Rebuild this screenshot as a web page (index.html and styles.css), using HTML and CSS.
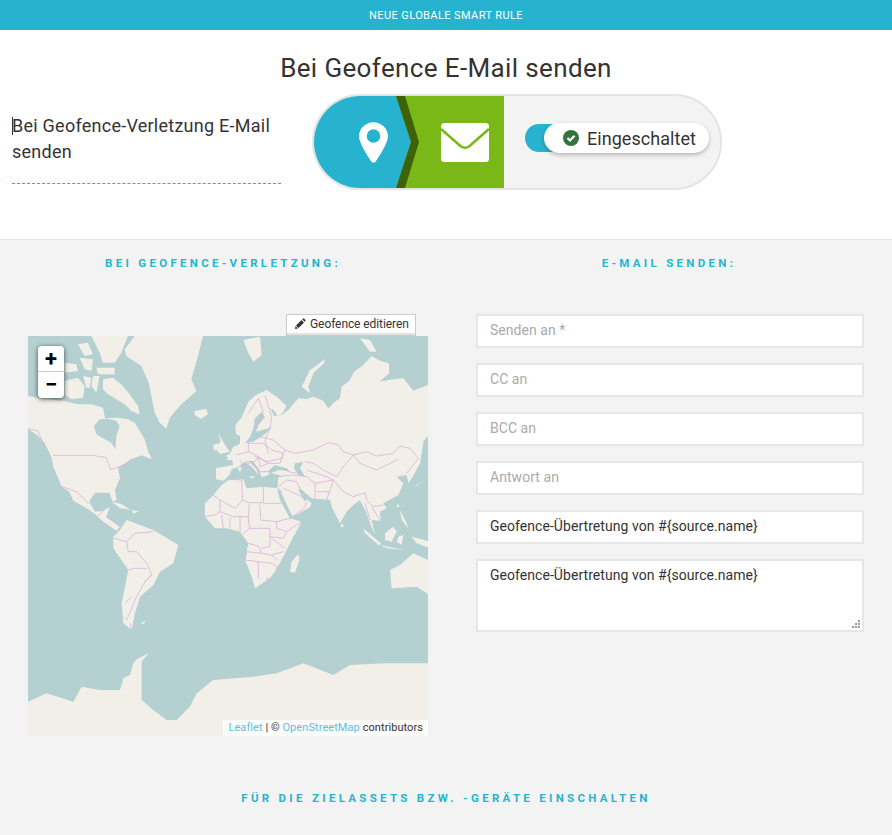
FILE: index.html
```html
<!DOCTYPE html>
<html lang="de">
<head>
<meta charset="utf-8">
<title>Neue globale Smart Rule</title>
<link rel="stylesheet" href="styles.css">
</head>
<body>
<header class="topbar">NEUE GLOBALE SMART RULE</header>
<section class="hero">
  <h1 class="hero-title">Bei Geofence E-Mail senden</h1>
  <div class="hero-row">
    <div class="desc"><span class="caret"></span>Bei Geofence-Verletzung E-Mail senden</div>
    <div class="pill">
      <div class="seg seg-blue">
        <svg class="pin" viewBox="0 0 30 42" width="29" height="41"><path fill="#fff" fill-rule="evenodd" d="M15 0C6.7 0 0 6.7 0 14.5 0 22 10 36 12.5 40.5c1.2 2 3.8 2 5 0C20 36 30 22 30 14.5 30 6.7 23.3 0 15 0ZM15 7.3a7 7 0 1 1 0 14 7 7 0 0 1 0-14Z"/></svg>
        <svg class="chevron" viewBox="0 0 24 92" width="24" height="92"><path fill="#27b3cf" d="M0 0 15 46 0 92Z"/><path fill="#3f6209" d="M0 0H9L23 46 9 92H0L15 46Z"/></svg>
      </div>
      <div class="seg seg-green">
        <svg class="mail" viewBox="0 0 48 39" width="48" height="39"><rect width="48" height="39" rx="3.5" fill="#fff"/><path d="M0 6 20 23.500Q24 26 28 23.500L48 6" fill="none" stroke="#7ab818" stroke-width="2.600"/></svg>
      </div>
      <div class="toggle">
        <span class="track"></span>
        <span class="knob">
          <svg class="check" viewBox="0 0 16 16" width="16" height="16"><circle cx="8" cy="8" r="8" fill="#35733b"/><path d="M4.500 8 7 10.500 11.500 5.800" fill="none" stroke="#fff" stroke-width="2.200"/></svg>
          Eingeschaltet
        </span>
      </div>
    </div>
  </div>
</section>
<main class="config">
  <div class="columns heads">
    <h2 class="section-head">BEI GEOFENCE-VERLETZUNG:</h2>
    <h2 class="section-head">E-MAIL SENDEN:</h2>
  </div>
  <div class="columns body-row">
    <div class="map-col">
      <button class="edit-btn" type="button">
        <svg viewBox="0 0 12 12" width="12" height="12"><path fill="#333" d="M2 7.500 7.500 2 10 4.500 4.500 10ZM1 11 1.600 8 4 10.400ZM8.200 1.300 9 .6Q9.500.2 10 .6L11.400 2Q11.800 2.500 11.400 3L10.700 3.800Z"/></svg>
        Geofence editieren
      </button>
      <div class="map">
        <svg class="map-art" viewBox="28 336 400 400" width="400" height="400">
          <rect x="28" y="336" width="400" height="400" fill="#b5d0d0"/>
          <!-- Americas -->
          <g class="land" transform="translate(20 310) scale(.33333)">
            <path d="M24 258 60 265 134 273 174 283 214 283 249 293 255 325 294 323 324 328 344 338 374 388 384 423 396 448 364 436 334 448 319 458 294 473 300 505 285 540 290 570 278 575 268 548 225 548 207 575 225 605 250 603 270 590 258 622 300 650 290 662 250 635 225 612 205 598 160 572 148 545 125 530 100 470 94 440 74 400 54 378 24 356Z"/>
            <path d="M275 575 305 582 332 600 300 595ZM335 600 356 604 340 612Z"/>
          </g>
          <!-- Arctic Canada, Greenland and Iceland -->
          <g class="land" transform="translate(28 336) scale(.33333)">
            <path d="M290 40 320 0H525L510 60 490 130 505 165 460 205 425 245 415 278 395 260 380 230 362 140 340 90 295 60Z"/>
            <path d="M225 130 255 125 285 150 305 175 330 210 335 235 310 225 290 205 265 190 240 175 225 160Z"/>
            <path d="M110 135 150 125 170 150 165 185 130 190 110 175ZM165 120 190 125 185 155 175 155ZM195 120 215 120 205 170 190 150ZM110 80 145 85 150 105 110 110ZM205 95 260 95 260 115 210 115ZM190 0H300L280 50 260 80 225 80 215 50ZM150 25 180 20 195 55 170 60ZM155 65 195 70 190 105 170 100Z"/>
            <path d="M500 225 535 218 540 235 520 248 500 238Z"/>
          </g>
          <!-- Northern Eurasia -->
          <g class="land" transform="translate(150 330) scale(.33333)">
            <path d="M258 312 256 285 275 262 295 215 318 195 350 180 380 200 410 228 400 245 385 262 372 240 362 236 372 258 395 255 415 240 425 228 445 205 470 207 490 200 520 212 535 235 555 215 570 205 575 170 600 150 612 125 640 105 665 78 690 92 717 100 718 130 688 155 730 148 760 145 790 182 834 165V318L812 342 815 362 800 390H230L250 350 290 335 275 320Z"/>
            <path d="M455 170 480 120 525 88 522 100 490 130 475 170 480 190ZM280 30 330 20 335 75 310 95 295 70ZM630 25 660 30 680 65 660 65ZM205 310 225 345 240 365 210 372 195 355 212 335ZM190 345 205 340 205 355 192 362Z"/>
          </g>
          <g class="land" transform="translate(190 420) scale(.33333)">
            <path d="M150 0V70L125 100 105 108 125 115 130 135 78 145 78 178 100 182 118 165 125 148 145 140 165 125 185 140 205 165 200 148 175 122 190 125 205 145 215 172 235 165 240 158 275 168 265 172 262 205 272 210 285 250 305 292 360 262 365 250 350 238 345 245 325 210 330 205 365 235 420 240 425 260 450 310 470 275 490 255 510 240 530 280 540 310 555 345 545 300 572 302 570 275 590 265 580 250 625 225 640 190 620 170 650 165 655 190 668 170 690 130 695 100 700 70V0Z"/>
            <path d="M45 250 70 225 95 195 120 178 160 178 170 205 220 200 262 205 270 240 300 295 335 305 300 370 285 400 258 450 240 475 195 505 185 470 165 420 175 370 150 335 110 325 75 325 45 290Z"/>
            <path d="M325 402 328 420 315 458 300 455 305 425ZM455 308 462 320 452 322ZM520 325 575 372 565 375 525 340ZM570 375 640 390 590 385ZM585 340 610 320 620 335 605 365 585 360ZM625 350 640 345 635 375 620 365ZM665 350 720 365V385L680 370ZM630 270 650 310 655 325 635 300ZM668 205 715 175 680 195ZM618 262 625 250 628 260ZM145 140 155 142 152 155 145 152ZM175 170 195 168 188 176Z"/>
          </g>
          <g class="land" transform="translate(20 520) scale(.33333)">
            <path d="M320 0 400 30 475 75 460 130 420 155 400 195 360 230 345 280 335 330 310 310 305 250 325 150 280 85 280 50 300 30Z"/>
            <path d="M1224 120 1180 100 1140 135 1110 150 1115 205 1190 200 1224 222Z"/>
            <path d="M24 545 80 520 160 545 185 500 240 510 300 510 310 475 330 465 340 430 350 418 385 400 365 425 365 540 400 570 440 600 470 600 510 560 530 520 580 480 700 470 770 460 850 430 940 465 990 435 1100 430 1224 430V648H24Z"/>
            <path d="M362 308 376 304 372 312Z"/>
          </g>
          <!-- inland and enclosed water -->
          <g class="sea" transform="translate(150 330) scale(.33333)">
            <path d="M335 245 345 262 325 285 318 305 345 298 365 292 345 312 310 335 285 340 300 320 310 295 315 265Z"/>
          </g>
          <g class="sea" transform="translate(190 420) scale(.33333)">
            <path d="M232 155 255 135 290 145 300 155 270 150 240 160ZM315 130 340 125 330 145 345 170 325 165 312 145ZM262 215 272 215 310 295 300 295Z"/>
          </g>
          <g class="sea" transform="translate(28 336) scale(.33333)">
            <path d="M198 270 215 250 240 248 265 255 275 270 265 300 262 340 250 320 230 310 205 295Z"/>
          </g>
          <!-- borders -->
          <g class="borders" transform="translate(28 336) scale(.33333)">
            <path d="M75 358H195L235 365 248 402 290 385 310 370M0 278 30 285 50 335"/>
          </g>
          <g class="borders" transform="translate(20 310) scale(.33333)">
            <path d="M125 530 170 545 205 580M235 618 250 600M300 650 270 625"/>
          </g>
          <g class="borders" transform="translate(20 520) scale(.33333)">
            <path d="M282 55 320 65 345 40 400 35M320 65 325 95 350 95 380 130 395 165 375 185 350 230 320 300 310 290M325 150 340 145 380 145M375 185 395 165M315 250 335 230M335 330 330 310"/>
          </g>
          <g class="borders" transform="translate(150 330) scale(.33333)">
            <path d="M295 250 325 205 340 245 325 280 310 300M345 195 365 260 360 295 345 330 355 370"/>
          </g>
          <g class="borders" transform="translate(200 430) scale(.33333)">
            <path d="M110 75 145 65V40H190L215 60 250 70 240 100 205 100 175 80 145 65M175 80 180 110 205 100M135 95H165L175 80M155 100 180 125 205 125M120 90 130 105 150 100M265 125 290 130"/>
          </g>
          <g class="borders" transform="translate(190 420) scale(.33333)">
            <path d="M120 178 155 180 158 240 135 265 90 240 70 225M220 200V250H275M205 258 215 248H178L155 240M178 250 175 300 180 325 160 340M210 258 212 300 260 305 300 295M260 305V325L290 335 335 305M290 335 280 355 240 350V325H180M45 290 75 285 90 275 130 290H175M90 240V275M95 285 100 325M120 295V325M150 290V335M175 370 205 378 215 400 245 405 260 420M240 350V380L215 385M165 420 205 425V475M205 425 245 430 262 440 258 450M165 420 170 395 215 400M245 355 285 385M245 405 280 395"/>
            <circle cx="234" cy="480" r="5"/>
            <path d="M285 90 315 100 370 90 415 68 445 75 460 95 490 105 530 95 560 108 610 100 630 78 660 85 685 115 650 160M490 105 510 130 560 150 600 130 625 118M345 125 370 130 400 150 440 170 460 140 490 105M350 150 410 170 430 180 460 215 490 230 525 218 530 240M305 165 350 170 375 190V235M375 190 430 180M320 185 330 205M430 180 420 210 410 240M380 215H420M265 200 290 180 320 185M280 205 325 225 345 235M305 292 345 262 350 245M265 170 305 165M210 50 250 60 285 90 275 115 230 125 195 110M530 240 550 260 580 255M545 260 570 300M525 250 540 300"/>
          </g>
        </svg>
        <div class="zoom">
          <span class="zoom-btn">+</span>
          <span class="zoom-btn">−</span>
        </div>
        <div class="attribution"><span class="link">Leaflet</span> | © <span class="link">OpenStreetMap</span> contributors</div>
      </div>
    </div>
    <form class="mail-form">
      <input class="field" type="text" placeholder="Senden an *">
      <input class="field" type="text" placeholder="CC an">
      <input class="field" type="text" placeholder="BCC an">
      <input class="field" type="text" placeholder="Antwort an">
      <input class="field" type="text" value="Geofence-Übertretung von #{source.name}">
      <div class="area-wrap">
        <textarea class="field area">Geofence-Übertretung von #{source.name}</textarea>
        <svg class="grip" viewBox="0 0 9 9" width="9" height="9"><path fill="#999" d="M6 0H8V2H6ZM3 3H5V5H3ZM6 3H8V5H6ZM0 6H2V8H0ZM3 6H5V8H3ZM6 6H8V8H6Z"/></svg>
      </div>
    </form>
  </div>
  <h2 class="section-head foot-head">FÜR DIE ZIELASSETS BZW. -GERÄTE EINSCHALTEN</h2>
</main>
</body>
</html>
```
FILE: styles.css
```css
* { box-sizing: border-box; }
html, body { margin: 0; height: 835px; overflow: hidden; }
body { background: #f3f3f3; font-family: Roboto, "Liberation Sans", sans-serif; color: #333; }

.topbar { height: 30px; line-height: 31px; background: #27b3cf; color: #fff; font-size: 11px; letter-spacing: .4px; text-align: center; }

.hero { height: 210px; background: #fff; border-bottom: 1px solid #e4e4e4; padding-top: 23px; }
.hero-title { margin: 0; font-size: 26px; line-height: 30px; font-weight: 400; text-align: center; letter-spacing: .37px; color: #333; }
.hero-row { display: flex; margin-top: 11px; padding-left: 12px; }
.desc { position: relative; width: 269px; margin-top: 19px; height: 71px; padding-bottom: 18px; border-bottom: 1px dashed #27b3cf; font-size: 18px; line-height: 26px; letter-spacing: .25px; }
.caret { position: absolute; left: 0; top: 4px; width: 1px; height: 18px; background: #333; }

.pill { display: flex; width: 410px; height: 96px; margin-left: 31px; border: 2px solid #e4e4e4; border-radius: 48px; background: #f3f3f3; overflow: hidden; }
.seg { position: relative; display: flex; align-items: center; height: 92px; }
.seg-blue { background: #27b3cf; width: 82px; z-index: 1; padding-left: 45px; }
.seg-green { width: 108px; background: #7ab818; padding-left: 45px; }
.chevron { position: absolute; left: 82px; top: 0; }
.toggle { display: flex; align-items: flex-start; margin: 27px 0 0 21px; }
.track { width: 46px; height: 28px; margin-top: 1px; border-radius: 14px; background: #27b3cf; }
.knob { display: flex; align-items: center; gap: 8px; width: 165px; height: 30px; margin-left: -27px; padding-left: 19px; border-radius: 15px; background: #fff; box-shadow: 0 2px 4px rgba(0,0,0,.25); font-size: 18px; letter-spacing: .05px; color: #333; }

.columns { display: grid; grid-template-columns: 446px 446px; }
.heads { padding-top: 15px; }
.section-head { margin: 0; font-size: 11.500px; line-height: 16px; font-weight: 700; letter-spacing: 3.300px; text-align: center; color: #27b3cf; }
.body-row { margin-top: 43px; }
.map-col { display: flex; flex-direction: column; align-items: flex-end; width: 428px; padding-left: 28px; }
.edit-btn { display: flex; align-items: center; gap: 4px; height: 22px; width: 130px; margin: 0 12px 0 0; padding: 0 0 2px 7px; background: #fff; border: 1px solid #ccc; box-shadow: inset 0 -2px #e2e2e2; font-family: inherit; font-size: 12px; letter-spacing: -.08px; color: #333; }
.map { position: relative; width: 400px; height: 400px; }
.map-art { display: block; filter: blur(.35px); }
.land { fill: #f2efe9; }
.sea { fill: #b5d0d0; }
.borders { fill: none; stroke: #dcaedc; stroke-width: 2.400; stroke-linejoin: round; }
.zoom { position: absolute; left: 10px; top: 10px; display: flex; flex-direction: column; width: 26px; height: 52px; border-radius: 4px; background: #fff; box-shadow: 0 1px 5px rgba(0,0,0,.65); }
.zoom-btn { height: 26px; line-height: 25px; font-size: 22px; font-weight: 700; text-align: center; color: #000; }
.zoom-btn:first-child { border-bottom: 1px solid #ccc; }
.attribution { position: absolute; right: 0; bottom: 0; height: 16px; line-height: 16px; padding: 0 5px; background: rgba(255,255,255,.8); font-size: 11px; letter-spacing: .07px; color: #333; }
.link { color: #5cbfe3; }

.mail-form { display: flex; flex-direction: column; gap: 15px; width: 388px; margin-left: 30px; }
.field { display: block; width: 388px; height: 34px; padding: 0 12px 2px; border: 2px solid #e6e6e6; border-radius: 0; background: #fff; font-family: inherit; font-size: 14px; letter-spacing: .05px; color: #333; outline: none; margin: 0; }
.field::placeholder { color: #aaa; opacity: 1; }
.area-wrap { position: relative; height: 73px; }
.area { height: 73px; padding-top: 4px; line-height: 20px; resize: none; }
.grip { position: absolute; right: 3px; bottom: 3px; }

.foot-head { margin-top: 54px; }
```
